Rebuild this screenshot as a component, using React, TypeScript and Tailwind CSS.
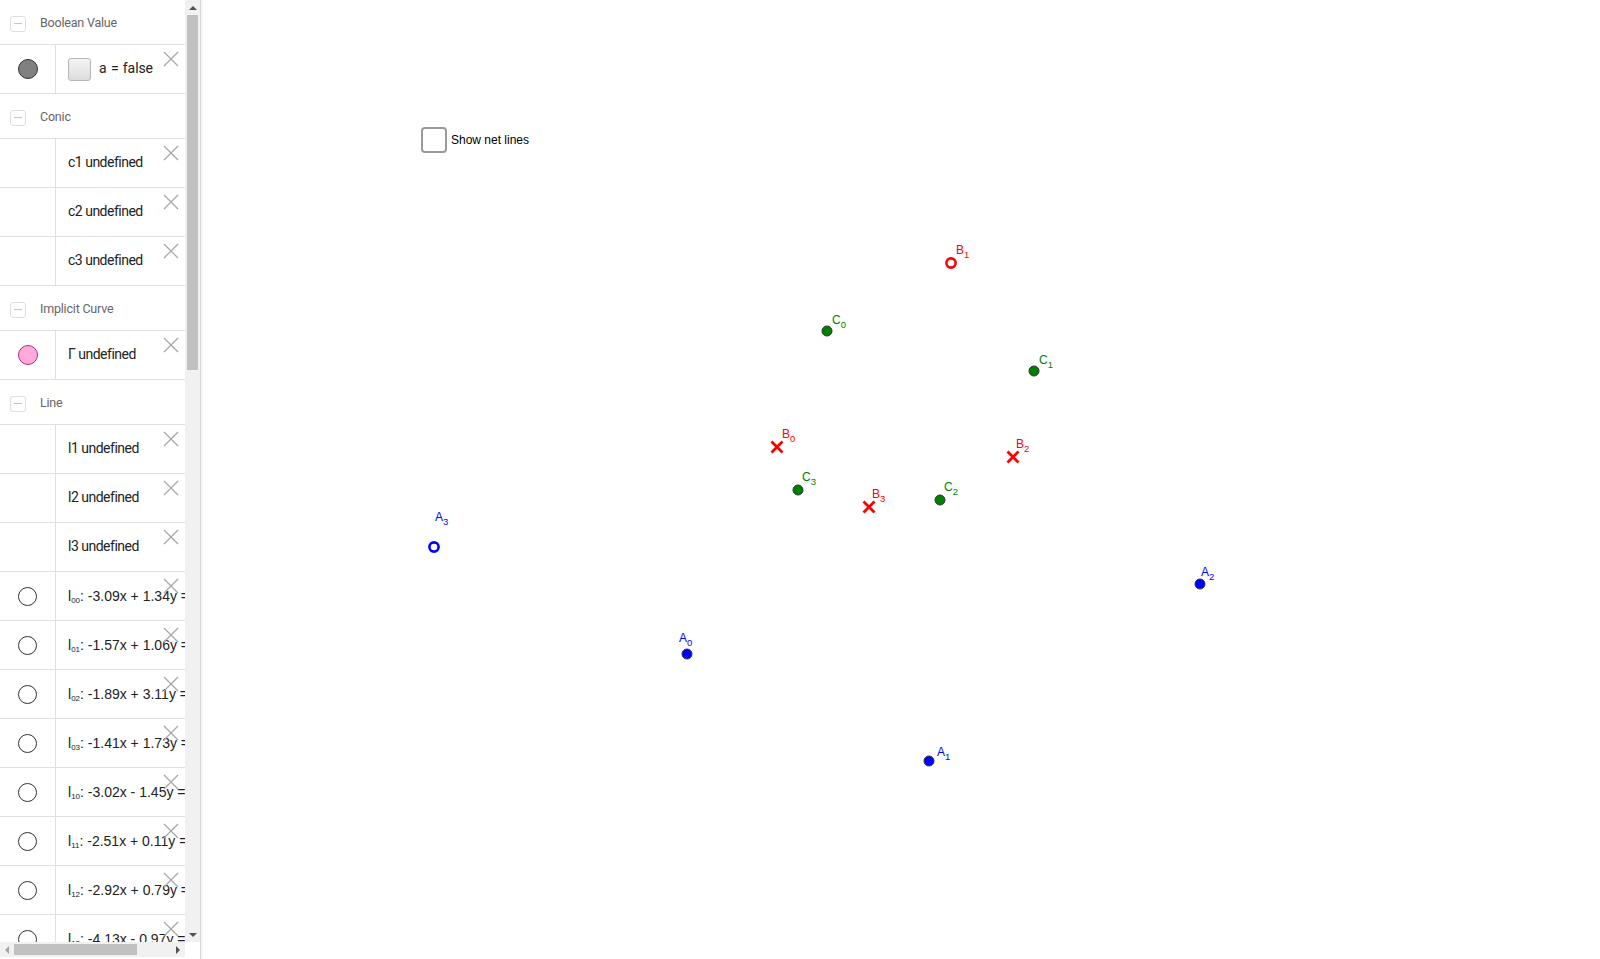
import React from "react";

type Item = {
  icon?: "gray" | "pink" | "ring";
  text?: string;
  eq?: { sub: string; body: string };
  bool?: boolean;
};

type Section = { title: string; items: Item[] };

const sections: Section[] = [
  { title: "Boolean Value", items: [{ icon: "gray", bool: true }] },
  {
    title: "Conic",
    items: [{ text: "c1 undefined" }, { text: "c2 undefined" }, { text: "c3 undefined" }],
  },
  { title: "Implicit Curve", items: [{ icon: "pink", text: "Γ undefined" }] },
  {
    title: "Line",
    items: [
      { text: "l1 undefined" },
      { text: "l2 undefined" },
      { text: "l3 undefined" },
      { icon: "ring", eq: { sub: "00", body: "-3.09x + 1.34y = 2.71" } },
      { icon: "ring", eq: { sub: "01", body: "-1.57x + 1.06y = 0.84" } },
      { icon: "ring", eq: { sub: "02", body: "-1.89x + 3.11y = 4.02" } },
      { icon: "ring", eq: { sub: "03", body: "-1.41x + 1.73y = 1.55" } },
      { icon: "ring", eq: { sub: "10", body: "-3.02x - 1.45y = -6.3" } },
      { icon: "ring", eq: { sub: "11", body: "-2.51x + 0.11y = -3.2" } },
      { icon: "ring", eq: { sub: "12", body: "-2.92x + 0.79y = -2.8" } },
      { icon: "ring", eq: { sub: "13", body: "-4.13x - 0.97y = -7.9" } },
    ],
  },
];

// points on the graphics view, page coordinates
type Pt = {
  name: string;
  sub: string;
  x: number;
  y: number;
  lx: number;
  ly: number;
  color: string;
  style: "dot" | "ring" | "cross";
};

const points: Pt[] = [
  { name: "B", sub: "1", x: 951, y: 263, lx: 956, ly: 254, color: "#ff0000", style: "ring" },
  { name: "C", sub: "0", x: 827, y: 331, lx: 832, ly: 324, color: "#008000", style: "dot" },
  { name: "C", sub: "1", x: 1034, y: 371, lx: 1039, ly: 364, color: "#008000", style: "dot" },
  { name: "B", sub: "0", x: 777, y: 447, lx: 782, ly: 438, color: "#ff0000", style: "cross" },
  { name: "B", sub: "2", x: 1013, y: 457, lx: 1016, ly: 448, color: "#ff0000", style: "cross" },
  { name: "C", sub: "3", x: 798, y: 490, lx: 802, ly: 481, color: "#008000", style: "dot" },
  { name: "B", sub: "3", x: 869, y: 507, lx: 872, ly: 498, color: "#ff0000", style: "cross" },
  { name: "C", sub: "2", x: 940, y: 500, lx: 944, ly: 491, color: "#008000", style: "dot" },
  { name: "A", sub: "3", x: 434, y: 547, lx: 435, ly: 521, color: "#0000ff", style: "ring" },
  { name: "A", sub: "0", x: 687, y: 654, lx: 679, ly: 642, color: "#0000ff", style: "dot" },
  { name: "A", sub: "2", x: 1200, y: 584, lx: 1201, ly: 576, color: "#0000ff", style: "dot" },
  { name: "A", sub: "1", x: 929, y: 761, lx: 937, ly: 756, color: "#0000ff", style: "dot" },
];

function CloseX() {
  return (
    <svg
      className="absolute left-[163px] top-[6px]"
      width="16"
      height="16"
      viewBox="0 0 16 16"
    >
      <path d="M1 1L15 15M15 1L1 15" stroke="#a8a8a8" strokeWidth="1.3" fill="none" />
    </svg>
  );
}

function RowIcon({ kind }: { kind?: Item["icon"] }) {
  if (kind === "gray")
    return <div className="h-5 w-5 rounded-full border border-[#333] bg-[#808080]" />;
  if (kind === "pink")
    return <div className="h-5 w-5 rounded-full border border-[#b03078] bg-[#ffaadb]" />;
  if (kind === "ring")
    return <div className="h-[19px] w-[19px] rounded-full border-[1.5px] border-[#333] bg-white" />;
  return null;
}

function Header({ title }: { title: string }) {
  return (
    <div className="flex h-[45px] shrink-0 items-center border-b border-[#e0e0e0] pt-[3px]">
      <div className="ml-[10px] flex h-4 w-4 items-center justify-center rounded-[3px] border border-[#dedede]">
        <div className="h-px w-[8px] bg-[#c4c4c4]" />
      </div>
      <span className="ml-[14px] text-[12.5px] tracking-[-0.2px] text-[#666]">{title}</span>
    </div>
  );
}

function Row({ item }: { item: Item }) {
  return (
    <div className="relative flex h-[49px] shrink-0 border-b border-[#e0e0e0]">
      <div className="flex w-[56px] shrink-0 items-center justify-center border-r border-[#e0e0e0]">
        <RowIcon kind={item.icon} />
      </div>
      <div className="flex items-center whitespace-nowrap pb-[2px] pl-[12px] text-[#222]">
        {item.bool && (
          <>
            <div className="mt-[2px] h-[23px] w-[23px] rounded-[3px] border border-[#b5b5b5] bg-gradient-to-b from-[#f4f4f4] to-[#dcdcdc]" />
            <span className="ml-[8px] text-[14px] tracking-[-0.1px]">
              a <span className="px-[1px]">=</span> false
            </span>
          </>
        )}
        {item.text && <span className="text-[14px] tracking-[-0.5px]">{item.text}</span>}
        {item.eq && (
          <span className="pt-[3px] font-['Liberation_Sans',Arial,sans-serif] text-[14px]">
            l<sub className="text-[8px]">{item.eq.sub}</sub>: {item.eq.body}
          </span>
        )}
      </div>
      <CloseX />
    </div>
  );
}

function Arrow({ dir }: { dir: "up" | "down" | "left" | "right" }) {
  const d = {
    up: "M0 5L4 1L8 5Z",
    down: "M0 1L8 1L4 5Z",
    left: "M5 0L5 8L1 4Z",
    right: "M1 0L5 4L1 8Z",
  }[dir];
  const w = dir === "up" || dir === "down" ? 8 : 6;
  const h = dir === "up" || dir === "down" ? 6 : 8;
  return (
    <svg width={w} height={h} viewBox={`0 0 ${w} ${h}`}>
      <path d={d} fill={dir === "left" ? "#a3a3a3" : "#505050"} />
    </svg>
  );
}

function PointMark({ p }: { p: Pt }) {
  if (p.style === "dot")
    return <circle cx={p.x} cy={p.y} r="5" fill={p.color} stroke="#333" strokeWidth="1" />;
  if (p.style === "ring")
    return <circle cx={p.x} cy={p.y} r="4.6" fill="none" stroke={p.color} strokeWidth="2.6" />;
  return (
    <path
      d={`M${p.x - 5.5} ${p.y - 5.5}L${p.x + 5.5} ${p.y + 5.5}M${p.x + 5.5} ${p.y - 5.5}L${p.x - 5.5} ${p.y + 5.5}`}
      stroke={p.color}
      strokeWidth="2.8"
      fill="none"
    />
  );
}

export default function App() {
  return (
    <div className="flex h-[959px] w-[1600px] overflow-hidden bg-white font-['Roboto',sans-serif]">
      {/* algebra view */}
      <div className="flex shrink-0">
        <div className="flex w-[185px] flex-col">
          <div className="flex h-[942px] flex-col overflow-hidden">
            {sections.map((s) => (
              <React.Fragment key={s.title}>
                <Header title={s.title} />
                {s.items.map((it, i) => (
                  <Row key={i} item={it} />
                ))}
              </React.Fragment>
            ))}
          </div>
          {/* horizontal scrollbar */}
          <div className="flex h-[15px] items-center bg-[#f1f1f1]">
            <div className="flex w-[14px] justify-center">
              <Arrow dir="left" />
            </div>
            <div className="h-[11px] w-[123px] bg-[#c1c1c1]" />
            <div className="flex-1" />
            <div className="flex w-[14px] justify-center">
              <Arrow dir="right" />
            </div>
          </div>
        </div>
        {/* vertical scrollbar */}
        <div className="flex w-[15px] flex-col">
          <div className="flex h-[942px] flex-col items-center bg-[#f1f1f1]">
            <div className="flex h-[15px] items-center">
              <Arrow dir="up" />
            </div>
            <div className="h-[355px] w-[11px] bg-[#c1c1c1]" />
            <div className="flex-1" />
            <div className="flex h-[15px] items-center">
              <Arrow dir="down" />
            </div>
          </div>
        </div>
        <div className="w-[3px] border-l border-[#d6d6d6] bg-[#f6f6f6]" />
      </div>

      {/* graphics view */}
      <div className="relative flex-1">
        <div className="absolute left-[218px] top-[127px] flex items-center">
          <div className="h-[26px] w-[26px] rounded-[4px] border-2 border-[#9a9a9a] bg-white" />
          <span className="ml-[4px] font-['Liberation_Sans',Arial,sans-serif] text-[12px] text-black">
            Show net lines
          </span>
        </div>
        <svg className="absolute inset-0" width="1397" height="959" viewBox="203 0 1397 959">
          {points.map((p) => (
            <g key={p.name + p.sub}>
              <PointMark p={p} />
              <text
                x={p.lx}
                y={p.ly}
                fill={p.color}
                fontFamily="Liberation Sans, Arial, sans-serif"
                fontSize="12"
              >
                {p.name}
                <tspan fontSize="9.5" dy="4">
                  {p.sub}
                </tspan>
              </text>
            </g>
          ))}
        </svg>
      </div>
    </div>
  );
}
